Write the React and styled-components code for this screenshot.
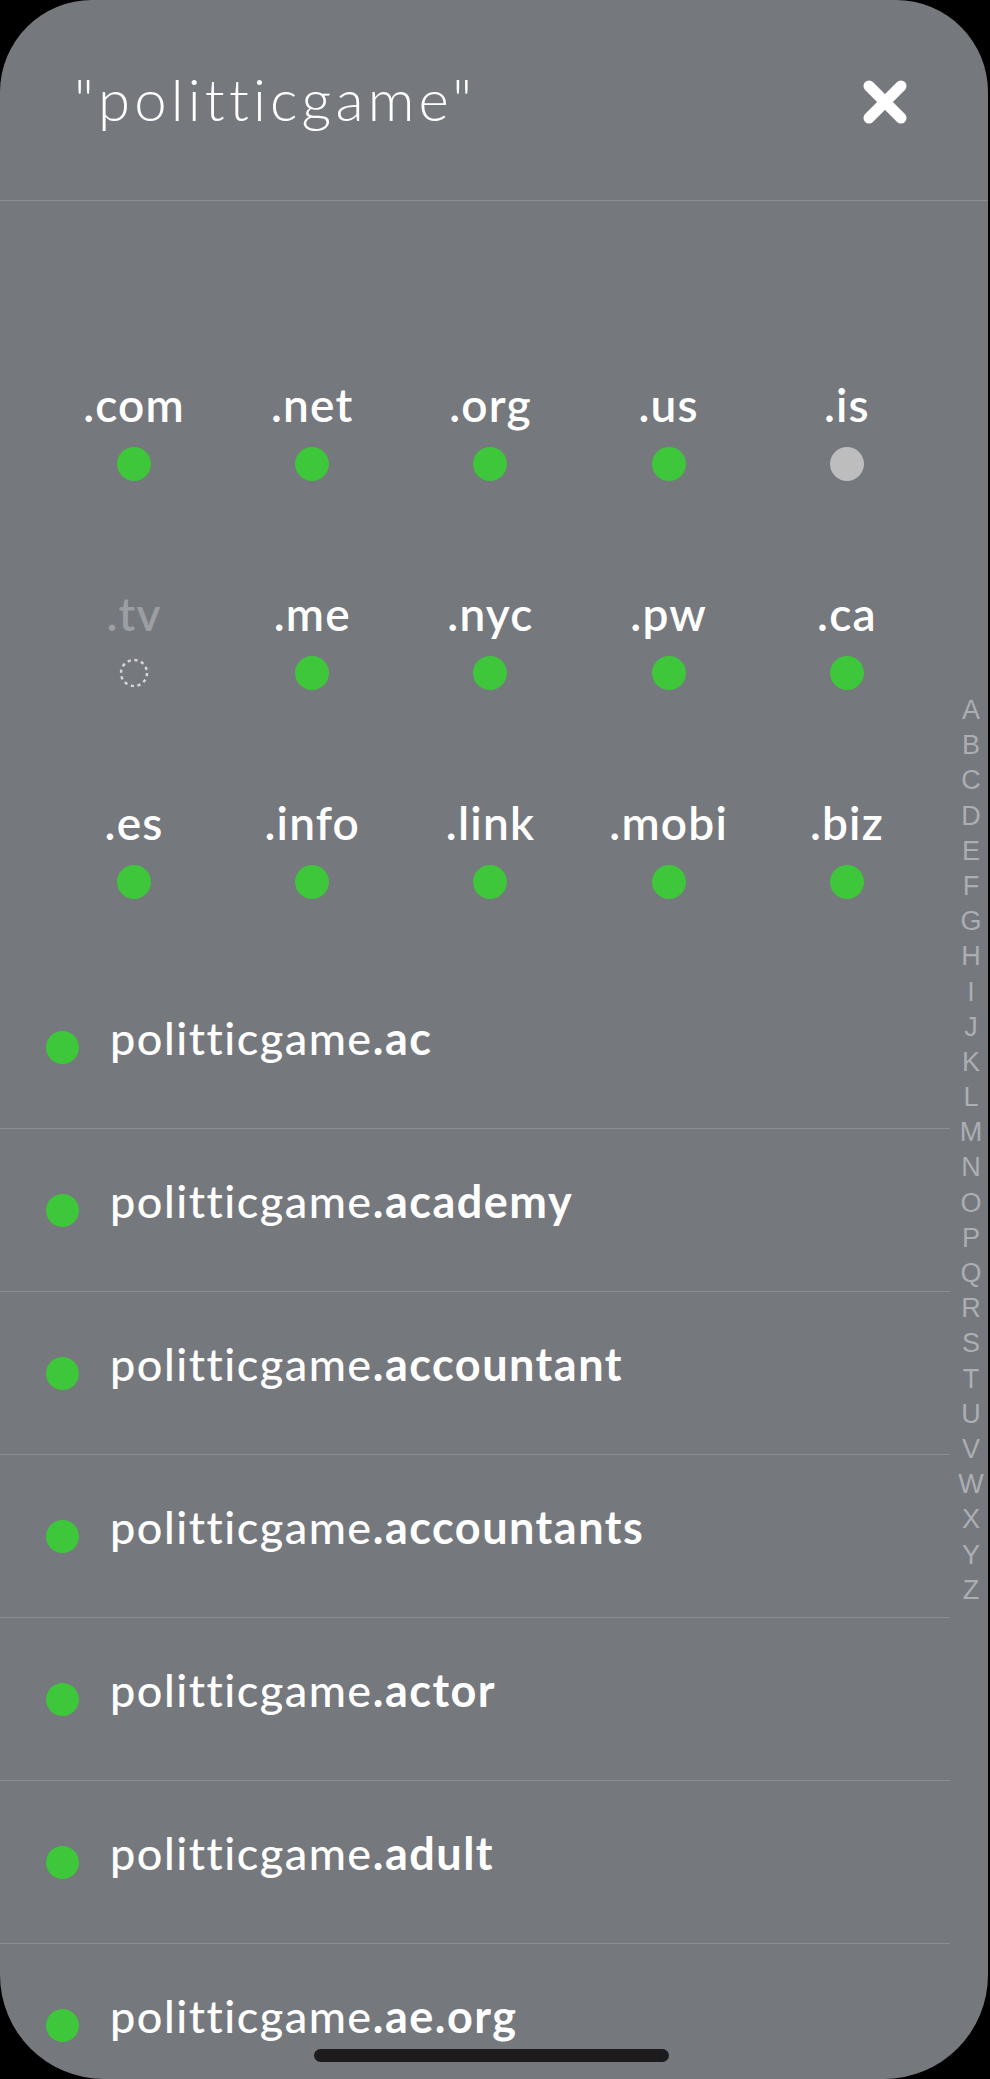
import React from 'react';
import styled, { createGlobalStyle } from 'styled-components';

const GlobalStyle = createGlobalStyle`
  html, body {
    margin: 0;
    padding: 0;
    background: #000;
  }
  body {
    font-family: 'Lato', 'Noto Sans', sans-serif;
    font-variant-ligatures: none;
    -webkit-font-smoothing: antialiased;
  }
`;

const Screen = styled.div`
  position: relative;
  width: 988px;
  height: 2079px;
  background: #75787d;
  border-radius: 92px 92px 104px 104px;
  overflow: hidden;
  display: flex;
  flex-direction: column;
`;

const Header = styled.header`
  height: 201px;
  box-sizing: border-box;
  border-bottom: 1px solid #8b8e92;
  display: flex;
  align-items: flex-start;
  justify-content: space-between;
  padding: 70px 80px 0 74px;
  flex-shrink: 0;
`;

const Title = styled.h1`
  margin: 0;
  font-size: 58px;
  line-height: 1;
  font-weight: 300;
  color: #fff;
  letter-spacing: 4.2px;
`;

const CloseButton = styled.button`
  margin-top: 10px;
  width: 46px;
  height: 44px;
  padding: 0;
  border: none;
  background: none;
  display: flex;
  align-items: center;
  justify-content: center;
`;

const ExtGrid = styled.div`
  display: grid;
  grid-template-columns: repeat(5, 1fr);
  row-gap: 110px;
  padding: 181px 52px 0 45px;
  flex-shrink: 0;
`;

const ExtCell = styled.div`
  display: flex;
  flex-direction: column;
  align-items: center;
  gap: 19px;
`;

const ExtLabel = styled.span`
  font-size: 46px;
  line-height: 1;
  font-weight: 600;
  letter-spacing: 1.2px;
  color: ${(p) => (p.$dim ? '#9b9ea2' : '#fff')};
`;

const Dot = styled.span`
  display: block;
  width: ${(p) => p.$size}px;
  height: ${(p) => p.$size}px;
  border-radius: 50%;
  background: ${(p) => (p.$state === 'taken' ? '#bdbdbd' : '#3ec73a')};
  flex-shrink: 0;
`;

const Spinner = styled.svg`
  display: block;
  width: 34px;
  height: 34px;
`;

const List = styled.ul`
  list-style: none;
  margin: 67px 0 0;
  padding: 0;
  width: 950px;
`;

const Row = styled.li`
  height: 163px;
  box-sizing: border-box;
  border-bottom: 1px solid #8b8e92;
  display: flex;
  align-items: center;
  padding-left: 46px;
  gap: 31px;
`;

const Name = styled.span`
  font-size: 45px;
  line-height: 1;
  font-weight: 500;
  letter-spacing: 1.5px;
  color: #fff;
  margin-bottom: 18px;
  white-space: nowrap;

  b {
    font-weight: 700;
  }
`;

const Index = styled.div`
  position: absolute;
  left: 952px;
  top: 693px;
  width: 38px;
  display: flex;
  flex-direction: column;
  align-items: center;
`;

const IndexLetter = styled.span`
  font-family: 'Liberation Sans', Arial, sans-serif;
  font-size: 27px;
  line-height: 35.2px;
  height: 35.2px;
  color: #abaeb2;
`;

const HomeIndicator = styled.div`
  position: absolute;
  left: 314px;
  bottom: 17px;
  width: 355px;
  height: 13px;
  border-radius: 7px;
  background: #1c1c1e;
`;

const extensions = [
  { ext: '.com' },
  { ext: '.net' },
  { ext: '.org' },
  { ext: '.us' },
  { ext: '.is', state: 'taken' },
  { ext: '.tv', state: 'loading' },
  { ext: '.me' },
  { ext: '.nyc' },
  { ext: '.pw' },
  { ext: '.ca' },
  { ext: '.es' },
  { ext: '.info' },
  { ext: '.link' },
  { ext: '.mobi' },
  { ext: '.biz' },
];

const domains = ['ac', 'academy', 'accountant', 'accountants', 'actor', 'adult', 'ae.org'];

const letters = 'ABCDEFGHIJKLMNOPQRSTUVWXYZ'.split('');

const CloseIcon = () => (
  <svg width="46" height="44" viewBox="0 0 46 44">
    <path
      d="M7 6 L39 38 M39 6 L7 38"
      stroke="#fff"
      strokeWidth="11"
      strokeLinecap="round"
      fill="none"
    />
  </svg>
);

const App = () => {
  return (
    <>
      <GlobalStyle />
      <Screen>
        <Header>
          <Title>"politticgame"</Title>
          <CloseButton aria-label="Close">
            <CloseIcon />
          </CloseButton>
        </Header>

        <ExtGrid>
          {extensions.map(({ ext, state }) => (
            <ExtCell key={ext}>
              <ExtLabel $dim={state === 'loading'}>{ext}</ExtLabel>
              {state === 'loading' ? (
                <Spinner viewBox="0 0 34 34">
                  <circle
                    cx="17"
                    cy="17"
                    r="13"
                    fill="none"
                    stroke="#d6d6d6"
                    strokeWidth="2.5"
                    strokeDasharray="3.2 3.6"
                  />
                </Spinner>
              ) : (
                <Dot $size={34} $state={state} />
              )}
            </ExtCell>
          ))}
        </ExtGrid>

        <List>
          {domains.map((tld) => (
            <Row key={tld}>
              <Dot $size={33} />
              <Name>
                politticgame<b>.{tld}</b>
              </Name>
            </Row>
          ))}
        </List>

        <Index>
          {letters.map((l) => (
            <IndexLetter key={l}>{l}</IndexLetter>
          ))}
        </Index>

        <HomeIndicator />
      </Screen>
    </>
  );
};

export default App;
